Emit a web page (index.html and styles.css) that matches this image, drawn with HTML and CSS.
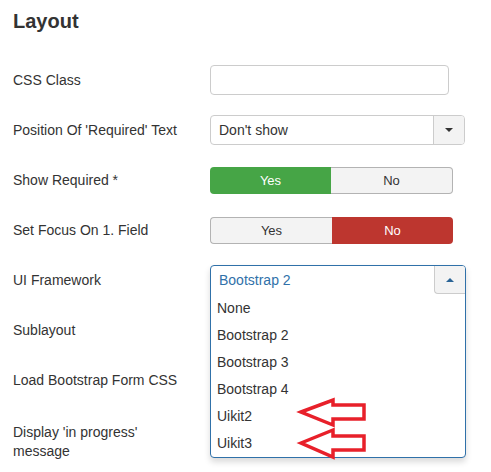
FILE: index.html
```html
<!DOCTYPE html>
<html>
<head>
<meta charset="utf-8">
<link rel="stylesheet" href="styles.css">
</head>
<body>
<div class="page">
  <h3 class="title">Layout</h3>
  <div class="form">
    <div class="row">
      <label class="label">CSS Class</label>
      <div class="controls"><div class="input"></div></div>
    </div>
    <div class="row">
      <label class="label">Position Of 'Required' Text</label>
      <div class="controls">
        <div class="select">
          <span class="select-text">Don't show</span>
          <span class="select-btn"><span class="caret-down"></span></span>
        </div>
      </div>
    </div>
    <div class="row">
      <label class="label">Show Required *</label>
      <div class="controls">
        <div class="toggle">
          <span class="tbtn yes-on">Yes</span>
          <span class="tbtn off right">No</span>
        </div>
      </div>
    </div>
    <div class="row">
      <label class="label">Set Focus On 1. Field</label>
      <div class="controls">
        <div class="toggle">
          <span class="tbtn off left">Yes</span>
          <span class="tbtn no-on">No</span>
        </div>
      </div>
    </div>
    <div class="row">
      <label class="label">UI Framework</label>
      <div class="controls">
        <div class="chosen">
          <div class="chosen-top">
            <span class="chosen-text">Bootstrap 2</span>
            <span class="chosen-btn"><span class="caret-up"></span></span>
          </div>
          <ul class="chosen-list">
            <li>None</li>
            <li>Bootstrap 2</li>
            <li>Bootstrap 3</li>
            <li>Bootstrap 4</li>
            <li>Uikit2</li>
            <li>Uikit3</li>
          </ul>
        </div>
      </div>
    </div>
    <div class="row">
      <label class="label">Sublayout</label>
      <div class="controls"></div>
    </div>
    <div class="row">
      <label class="label">Load Bootstrap Form CSS</label>
      <div class="controls"></div>
    </div>
    <div class="row last">
      <label class="label narrow">Display 'in progress' message</label>
      <div class="controls"></div>
    </div>
  </div>
  <svg class="arrows" width="491" height="472" viewBox="0 0 491 472">
    <polygon points="301,412 333,400 333,405 364,405 364,419 333,419 333,425" />
    <polygon points="301,443 333,430 333,436 364,436 364,450 333,450 333,457" />
  </svg>
</div>
</body>
</html>
```

FILE: styles.css
```css
html, body {
  margin: 0;
  padding: 0;
  background: #fff;
}
.page {
  position: relative;
  width: 491px;
  height: 472px;
  overflow: hidden;
  padding: 9px 0 0 13px;
  box-sizing: border-box;
  font-family: "Liberation Sans", Arial, sans-serif;
  font-size: 14px;
  color: #333;
}
.title {
  margin: 0 0 32px 0;
  font-size: 20px;
  line-height: 24px;
  font-weight: bold;
  color: #333;
}
.form {
  display: flex;
  flex-direction: column;
  gap: 20px;
}
.row {
  display: flex;
  height: 30px;
  align-items: flex-start;
}
.label {
  width: 182px;
  flex: none;
  padding-top: 6px;
  line-height: 19px;
  white-space: nowrap;
}
.label.narrow {
  white-space: normal;
}
.row.last .label {
  padding-top: 8px;
}
.controls {
  margin-left: 15px;
  height: 30px;
  display: flex;
  align-items: center;
  position: relative;
}
.input {
  width: 239px;
  height: 30px;
  box-sizing: border-box;
  border: 1px solid #ccc;
  border-radius: 4px;
  background: #fff;
}
.select {
  width: 255px;
  height: 30px;
  box-sizing: border-box;
  border: 1px solid #ccc;
  border-radius: 4px;
  display: flex;
  align-items: stretch;
  overflow: hidden;
}
.select-text {
  flex: 1;
  padding-left: 8px;
  line-height: 28px;
  color: #333;
}
.select-btn {
  width: 30px;
  background: #f3f3f3;
  border-left: 1px solid #ccc;
  display: flex;
  align-items: center;
  justify-content: center;
}
.caret-down {
  width: 0;
  height: 0;
  border-left: 4px solid transparent;
  border-right: 4px solid transparent;
  border-top: 4px solid #333;
}
.toggle {
  width: 243px;
  height: 27px;
  display: flex;
}
.tbtn {
  flex: 1;
  display: flex;
  align-items: center;
  justify-content: center;
  box-sizing: border-box;
  font-size: 13px;
}
.yes-on {
  background: #46a546;
  color: #fff;
  border-radius: 4px 0 0 4px;
}
.no-on {
  background: #bd362f;
  color: #fff;
  border-radius: 0 4px 4px 0;
}
.off {
  background: #f3f3f3;
  color: #333;
  border: 1px solid #b3b3b3;
}
.off.right {
  border-left: none;
  border-radius: 0 4px 4px 0;
}
.off.left {
  border-right: none;
  border-radius: 4px 0 0 4px;
}
.chosen {
  position: absolute;
  left: 0;
  top: 0;
  width: 256px;
  z-index: 2;
  background: #fff;
  border: 1px solid #3071a9;
  border-radius: 4px;
  box-sizing: border-box;
  box-shadow: 0 4px 6px rgba(0, 0, 0, 0.15);
}
.chosen-top {
  height: 28px;
  display: flex;
  align-items: stretch;
}
.chosen-text {
  flex: 1;
  padding-left: 8px;
  line-height: 28px;
  color: #3071a9;
}
.chosen-btn {
  width: 30px;
  background: #f3f3f3;
  border-left: 1px solid #ccc;
  border-bottom: 1px solid #ccc;
  border-radius: 0 3px 0 4px;
  display: flex;
  align-items: center;
  justify-content: center;
}
.caret-up {
  width: 0;
  height: 0;
  border-left: 4px solid transparent;
  border-right: 4px solid transparent;
  border-bottom: 4px solid #2a6496;
}
.chosen-list {
  list-style: none;
  margin: 0;
  padding: 0 0 1px 0;
}
.chosen-list li {
  height: 27px;
  line-height: 28px;
  padding-left: 6px;
  color: #333;
}
.arrows {
  position: absolute;
  left: 0;
  top: 0;
  z-index: 3;
  pointer-events: none;
}
.arrows polygon {
  fill: none;
  stroke: #e8202a;
  stroke-width: 3.5;
  stroke-linejoin: miter;
}
```
